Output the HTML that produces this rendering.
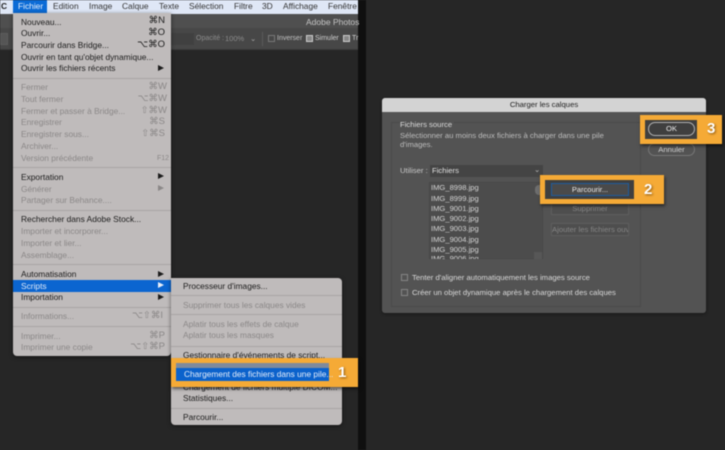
<!DOCTYPE html>
<html lang="fr"><head><meta charset="utf-8"><title>Charger les calques</title>
<style>
html,body{margin:0;padding:0;background:#262626}
#p{position:relative;width:725px;height:450px;overflow:hidden;background:#262626;font:7.7px/12px "Liberation Sans",sans-serif;filter:blur(.4px)}
#p div{position:absolute;white-space:nowrap}
.i{left:8px;color:#1c1c1c;font-size:8.4px}
.d{left:8px;color:#8b8888;font-size:8.4px}
.k{color:#1c1c1c;text-align:right;left:100px;font-size:9.5px}
.kd{color:#8b8888;text-align:right;left:100px;font-size:9.5px}
.ar{left:155px;width:0;height:0}
.ar{left:145px;border-left:6px solid #1c1c1c;border-top:3.5px solid transparent;border-bottom:3.5px solid transparent}
.ard{border-left-color:#8b8888}
.s{left:0;width:158px;height:1px;background:#a9a5a5}
.m{top:0;color:#333;font-size:8.4px;line-height:13px}
.sub{left:12px;color:#1c1c1c;font-size:8.35px}
.subd{left:12px;color:#8b8888;font-size:8.35px}
.ss{left:0;width:171px;height:1px;background:#a9a5a5}
.or{background:#f5aa36;box-shadow:1px 2px 3px rgba(0,0,0,.55)}
.n{color:#fff;font-weight:bold;font-size:15px;line-height:16px;text-shadow:1px 1px 2px rgba(90,50,0,.7)}
.f{left:431px;color:#d2d2d2;font-size:7.6px}
</style></head><body><div id="p">

<!-- top bars -->
<div style="left:0;top:0;width:358px;height:14px;background:#dfe7f6"></div>
<div style="left:0;top:14px;width:358px;height:14px;background:#4f4f4f"></div>
<div style="left:0;top:28px;width:358px;height:21px;background:#474747;border-bottom:1px solid #3a3a3a"></div>
<div style="left:358px;top:0;width:8px;height:450px;background:#0f0f0f"></div>

<div class="m" style="left:1px;font-weight:bold;color:#222">C</div>
<div style="left:13px;top:0;width:34px;height:13px;background:#0b6bd6"></div>
<div class="m" style="left:18px;color:#e8f0fc">Fichier</div>
<div class="m" style="left:53px">Edition</div>
<div class="m" style="left:89px">Image</div>
<div class="m" style="left:122px">Calque</div>
<div class="m" style="left:159px">Texte</div>
<div class="m" style="left:189px">Sélection</div>
<div class="m" style="left:234px">Filtre</div>
<div class="m" style="left:262px">3D</div>
<div class="m" style="left:283px">Affichage</div>
<div class="m" style="left:328px">Fenêtre</div>

<div style="left:306px;top:16px;color:#c4c4c4;font-size:8.5px">Adobe Photos</div>
<div style="left:0;top:33px;width:8px;height:12px;background:#555;border:1px solid #5c5c5c;box-sizing:border-box"></div>
<div style="left:171px;top:33px;width:23px;height:12px;background:#404040"></div>
<div style="left:196px;top:33px;color:#8c8c8c;font-size:7px">Opacité :</div>
<div style="left:225px;top:33px;color:#8c8c8c;font-size:7.5px">100%</div>
<div style="left:250px;top:33px;color:#aaa;font-size:7.5px">⌄</div>
<div style="left:262px;top:32px;width:1px;height:14px;background:#5a5a5a"></div>
<div style="left:268px;top:35px;width:5px;height:5px;border:1px solid #777"></div>
<div style="left:277px;top:33px;color:#c0c0c0;font-size:7px">Inverser</div>
<div style="left:306px;top:35px;width:5px;height:5px;border:1px solid #ccc;background:#888"></div>
<div style="left:315px;top:33px;color:#d0d0d0;font-size:7px">Simuler</div>
<div style="left:343px;top:35px;width:5px;height:5px;border:1px solid #ccc;background:#888"></div>
<div style="left:352px;top:33px;color:#d0d0d0;font-size:7px">Tr</div>

<!-- Fichier menu -->
<div style="left:13px;top:13px;width:158px;height:343px;background:#bfbbbb;border-radius:0 0 4px 4px;box-shadow:0 1px 4px rgba(0,0,0,.5)">
<div class="i" style="top:2.7px">Nouveau...</div><div class="k" style="top:2px;width:52px">⌘N</div>
<div class="i" style="top:14px">Ouvrir...</div><div class="k" style="top:14px;width:52px">⌘O</div>
<div class="i" style="top:26px">Parcourir dans Bridge...</div><div class="k" style="top:26px;width:52px">⌥⌘O</div>
<div class="i" style="top:37.7px">Ouvrir en tant qu'objet dynamique...</div>
<div class="i" style="top:49.3px">Ouvrir les fichiers récents</div><div class="ar" style="top:52px"></div>
<div class="s" style="top:65px"></div>
<div class="d" style="top:68.3px">Fermer</div><div class="kd" style="top:68px;width:54px">⌘W</div>
<div class="d" style="top:80px">Tout fermer</div><div class="kd" style="top:80px;width:54px">⌥⌘W</div>
<div class="d" style="top:91.7px">Fermer et passer à Bridge...</div><div class="kd" style="top:92px;width:54px">⇧⌘W</div>
<div class="d" style="top:103.3px">Enregistrer</div><div class="kd" style="top:103px;width:52px">⌘S</div>
<div class="d" style="top:115px">Enregistrer sous...</div><div class="kd" style="top:115px;width:52px">⇧⌘S</div>
<div class="d" style="top:127px">Archiver...</div>
<div class="d" style="top:139px">Version précédente</div><div class="kd" style="top:140px;width:56px;font-size:7px">F12</div>
<div class="s" style="top:154px"></div>
<div class="i" style="top:158px">Exportation</div><div class="ar" style="top:160px"></div>
<div class="d" style="top:169.5px">Générer</div><div class="ar ard" style="top:172px"></div>
<div class="d" style="top:181px">Partager sur Behance....</div>
<div class="s" style="top:197px"></div>
<div class="i" style="top:200px">Rechercher dans Adobe Stock...</div>
<div class="d" style="top:212px">Importer et incorporer...</div>
<div class="d" style="top:224px">Importer et lier...</div>
<div class="d" style="top:235.5px">Assemblage...</div>
<div class="s" style="top:251px"></div>
<div class="i" style="top:255px">Automatisation</div><div class="ar" style="top:258px"></div>
<div style="left:0;top:267px;width:158px;height:12px;background:#0b65d0"></div>
<div class="i" style="top:267px;color:#dfe9f8">Scripts</div><div class="ar" style="top:269px;border-left-color:#e8eef8"></div>
<div class="i" style="top:278px">Importation</div><div class="ar" style="top:281px"></div>
<div class="s" style="top:294px"></div>
<div class="d" style="top:297px">Informations...</div><div class="kd" style="top:297px;width:50px">⌥⇧⌘I</div>
<div class="s" style="top:313px"></div>
<div class="d" style="top:317px">Imprimer...</div><div class="kd" style="top:317px;width:52px">⌘P</div>
<div class="d" style="top:328px">Imprimer une copie</div><div class="kd" style="top:328px;width:52px">⌥⇧⌘P</div>
</div>

<!-- Scripts submenu -->
<div style="left:171px;top:278px;width:171px;height:147px;background:#bfbbbb;border-radius:0 4px 4px 4px;box-shadow:0 1px 4px rgba(0,0,0,.5)">
<div class="sub" style="top:1.7px">Processeur d'images...</div>
<div class="ss" style="top:17px"></div>
<div class="subd" style="top:20.7px">Supprimer tous les calques vides</div>
<div class="ss" style="top:36px"></div>
<div class="subd" style="top:40px">Aplatir tous les effets de calque</div>
<div class="subd" style="top:51.3px">Aplatir tous les masques</div>
<div class="ss" style="top:67.7px"></div>
<div class="sub" style="top:70.7px">Gestionnaire d'événements de script...</div>
<div class="sub" style="top:103px">Chargement de fichiers multiple DICOM...</div>
<div class="sub" style="top:113.5px">Statistiques...</div>
<div class="ss" style="top:129.7px"></div>
<div class="sub" style="top:132.7px">Parcourir...</div>
</div>

<!-- orange 1 -->
<div class="or" style="left:171px;top:358px;width:187px;height:29px"></div>
<div style="left:176px;top:363px;width:153px;height:5px;background:#7f8a9c"></div>
<div style="left:176px;top:368px;width:153px;height:13px;background:#0b62cc"></div>
<div style="left:184px;top:368px;color:#e6eefb;font-size:8.35px">Chargement des fichiers dans une pile...</div>
<div class="n" style="left:338px;top:365px">1</div>

<!-- dialog -->
<div style="left:382px;top:98px;width:324px;height:215px;background:#535353;border-radius:3px;box-shadow:0 1px 3px rgba(0,0,0,.4)"></div>
<div style="left:382px;top:98px;width:324px;height:14px;background:#d3d3d3;border-radius:3px 3px 0 0;text-align:center;line-height:14px;color:#222">Charger les calques</div>
<div style="left:391px;top:122px;width:248px;height:183px;border:1px solid #4a4a4a"></div>

<div style="left:400px;top:119px;color:#dcdcdc;background:#535353;padding-right:2px">Fichiers source</div>
<div style="left:400px;top:131px;color:#bdbdbd;line-height:9px">Sélectionner au moins deux fichiers à charger dans une pile<br>d'images.</div>
<div style="left:400px;top:165px;color:#c8c8c8">Utiliser :</div>
<div style="left:430px;top:165px;width:113px;height:12px;background:#444"></div>
<div style="left:432px;top:165px;color:#e0e0e0">Fichiers</div>
<div style="left:534px;top:164px;color:#bbb">⌄</div>

<!-- list -->
<div style="left:429px;top:182px;width:114px;height:77px;background:#4c4c4c;border:1px solid #484848;box-sizing:border-box"></div>
<div class="f" style="top:182px">IMG_8998.jpg</div>
<div class="f" style="top:192.5px">IMG_8999.jpg</div>
<div class="f" style="top:202.5px">IMG_9001.jpg</div>
<div class="f" style="top:213px">IMG_9002.jpg</div>
<div class="f" style="top:223px">IMG_9003.jpg</div>
<div class="f" style="top:233.5px">IMG_9004.jpg</div>
<div class="f" style="top:243.5px">IMG_9005.jpg</div>
<div class="f" style="top:253px;height:6px;overflow:hidden">IMG_9006.jpg</div>
<div style="left:535px;top:185px;width:7px;height:10px;background:#6e6e6e;border-radius:4px 0 0 4px"></div>
<div style="left:534px;top:252px;width:8px;height:7px;background:#575757"></div>

<!-- buttons -->
<div style="left:551px;top:202px;width:78px;height:13px;border:1px solid #5e5e5e;box-sizing:border-box;background:#4e4e4e;text-align:center;color:#858585;line-height:11px">Supprimer</div>
<div style="left:551px;top:222.5px;width:78px;height:13px;border:1px solid #5e5e5e;box-sizing:border-box;background:#4e4e4e;color:#858585;line-height:11px;overflow:hidden">Ajouter les fichiers ouv</div>
<div style="left:648px;top:143px;width:47px;height:13px;border:1px solid #777;border-radius:7px;box-sizing:border-box;text-align:center;color:#d0d0d0;line-height:12px">Annuler</div>

<!-- checkboxes -->
<div style="left:401px;top:274px;width:5px;height:5px;border:1px solid #858585"></div>
<div style="left:412px;top:272px;color:#d8d8d8">Tenter d'aligner automatiquement les images source</div>
<div style="left:401px;top:289px;width:5px;height:5px;border:1px solid #858585"></div>
<div style="left:412px;top:287px;color:#d8d8d8">Créer un objet dynamique après le chargement des calques</div>

<!-- orange 2 -->
<div class="or" style="left:540px;top:175px;width:124px;height:29px"></div>
<div style="left:545px;top:180px;width:89px;height:19px;background:#3f3f3f"></div>
<div style="left:551px;top:183px;width:78px;height:13px;border:1px solid #1f5d9e;box-sizing:border-box;background:#4a4a4a;text-align:center;color:#e8e8e8;line-height:11px;font-size:7.5px">Parcourir...</div>
<div class="n" style="left:644px;top:182px">2</div>

<!-- orange 3 -->
<div class="or" style="left:640px;top:115px;width:82px;height:29px"></div>
<div style="left:645px;top:120px;width:52px;height:19px;background:#3f3f3f"></div>
<div style="left:648px;top:122px;width:47px;height:14px;border:1px solid #b0b0b0;border-radius:7px;box-sizing:border-box;text-align:center;color:#e8e8e8;line-height:12px">OK</div>
<div class="n" style="left:707px;top:121px">3</div>

</div></body></html>
